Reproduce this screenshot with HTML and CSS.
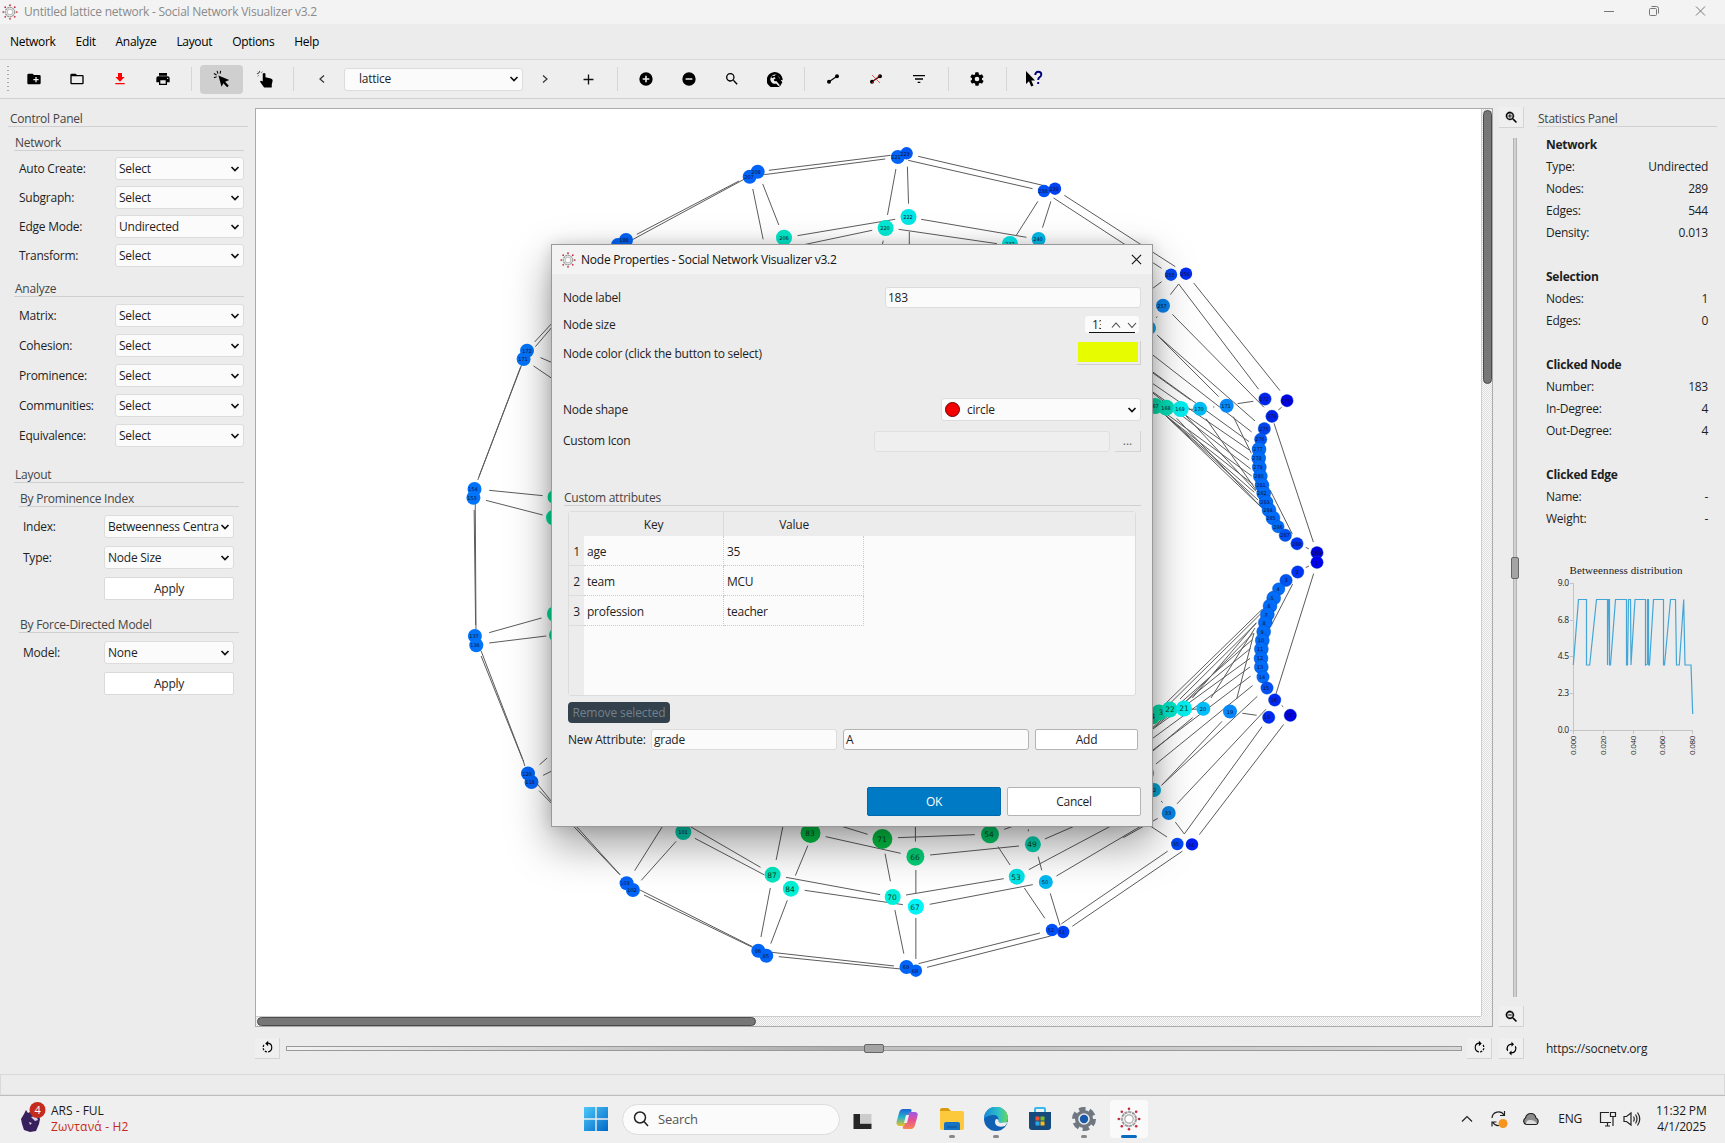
FILE: index.html
```html
<!DOCTYPE html>
<html lang="en">
<head>
<meta charset="utf-8">
<title>Social Network Visualizer</title>
<link rel="stylesheet" href="styles.css">
</head>
<body>
<svg class="defs" width="0" height="0">
  <defs>
    <symbol id="logo" viewBox="0 0 24 24">
      <circle cx="12" cy="12" r="7" fill="none" stroke="#999" stroke-width="2" stroke-dasharray="3.2 .8"/>
      <circle cx="12" cy="12" r="4.2" fill="#fff" stroke="#aaa" stroke-width="1.2"/>
      <path d="M12 2.500v4M12 17.500v4M2.500 12h4M17.500 12h4M5.300 5.300l3 3M15.700 15.700l3 3M5.300 18.700l3-3M15.700 8.300l3-3" stroke="#bbb"/>
      <g fill="#c4283c"><circle cx="12" cy="1.800" r="1.300"/><circle cx="12" cy="22.200" r="1.300"/><circle cx="1.800" cy="12" r="1.300"/><circle cx="22.200" cy="12" r="1.300"/><circle cx="4.800" cy="4.800" r="1.300"/><circle cx="19.200" cy="4.800" r="1.300"/><circle cx="4.800" cy="19.200" r="1.300"/><circle cx="19.200" cy="19.200" r="1.300"/></g>
    </symbol>
    <symbol id="chev" viewBox="0 0 10 10"><path d="M1.500 3l3.500 3.500L8.500 3" fill="none" stroke="#111" stroke-width="1.700"/></symbol>
    <symbol id="rotate" viewBox="0 0 24 24"><path d="M13 4.100V1l-4.600 4.500L13 10V6.100a6 6 0 0 1 0 11.800v2a8 8 0 0 0 0-15.800z"/><path d="M7.100 8.500L5.700 7.100A8 8 0 0 0 4.100 11h2a6 6 0 0 1 1-2.500zM6.100 13h-2c.2 1.400.7 2.700 1.600 3.900l1.400-1.400a6 6 0 0 1-1-2.500zm1 5.300c1.200.9 2.500 1.400 3.900 1.600v-2a6 6 0 0 1-2.500-1z"/></symbol>
  </defs>
</svg>

<header class="titlebar">
  <svg class="logo"><use href="#logo"/></svg>
  <span>Untitled lattice network - Social Network Visualizer v3.2</span>
  <svg class="winbtns" viewBox="0 0 112 20" fill="none" stroke="#777"><path d="M5 10.500h10M97 5.500l9 9M106 5.500l-9 9"/><rect x="50.500" y="7.500" width="7" height="7" rx="1"/><path d="M52.500 5.500h5q2 0 2 2v5"/></svg>
</header>

<nav class="menubar"><span>Network</span><span>Edit</span><span>Analyze</span><span>Layout</span><span>Options</span><span>Help</span></nav>

<div class="toolbar">
  <i class="grip"></i>
  <svg class="tb" viewBox="0 0 24 24"><path d="M20 6h-8l-2-2H4a2 2 0 0 0-2 2v12c0 1.100.9 2 2 2h16a2 2 0 0 0 2-2V8a2 2 0 0 0-2-2zm-1 8h-3v3h-2v-3h-3v-2h3V9h2v3h3z"/></svg>
  <svg class="tb" viewBox="0 0 24 24"><path d="M20 6h-8l-2-2H4a2 2 0 0 0-2 2v12c0 1.100.9 2 2 2h16a2 2 0 0 0 2-2V8a2 2 0 0 0-2-2zm0 12H4V8h16z"/></svg>
  <svg class="tb red" viewBox="0 0 24 24"><path d="M19 9h-4V3H9v6H5l7 7zM5 18v2h14v-2z"/></svg>
  <svg class="tb" viewBox="0 0 24 24"><path d="M19 8H5a3 3 0 0 0-3 3v6h4v4h12v-4h4v-6a3 3 0 0 0-3-3zm-3 11H8v-5h8zm3-7a1 1 0 1 1 0-2 1 1 0 0 1 0 2zM18 3H6v4h12z"/></svg>
  <i class="sep"></i>
  <div class="tool on"><svg viewBox="0 0 20 20"><path d="M6 6l12 5-4.500 2 4 4.500-1.800 1.700-4.200-4.500-2 4z"/><path d="M4.500 1l1 3M8.500 1l-.6 3M1 4l3 1.500M1 8.500L4 7.500" stroke="#000" stroke-width="1.200"/></svg></div>
  <div class="tool"><svg viewBox="0 0 20 20"><path d="M7.500 4q1.500-1.500 3 0v4l6 1.500q2 .5 2 2.500l-1 4v3.500H9L4.500 13q.5-1.800 3-.3z"/><path d="M4 1v2M1 4h2M6 3l1-1M2 2l1 1M3 6L2 7" stroke="#333"/></svg></div>
  <i class="sep s2"></i>
  <svg class="arrow a1" viewBox="0 0 10 10"><path d="M7 1.500L3 5l4 3.500"/></svg>
  <div class="combo netbox"><span>lattice</span><svg><use href="#chev"/></svg></div>
  <svg class="arrow a2" viewBox="0 0 10 10"><path d="M3 1.500L7 5 3 8.500"/></svg>
  <svg class="arrow a3" viewBox="0 0 10 10"><path d="M5 .5v9M.5 5h9"/></svg>
  <i class="sep s3"></i>
  <svg class="tb" viewBox="0 0 24 24"><path d="M12 2a10 10 0 1 0 0 20 10 10 0 0 0 0-20zm5 11.200h-3.800V17h-2.400v-3.800H7v-2.400h3.800V7h2.400v3.800H17z"/></svg>
  <svg class="tb" viewBox="0 0 24 24"><path d="M12 2a10 10 0 1 0 0 20 10 10 0 0 0 0-20zm5 11.200H7v-2.400h10z"/></svg>
  <svg class="tb" viewBox="0 0 24 24"><path d="M15.500 14h-.8l-.3-.3a6.500 6.500 0 1 0-.7.7l.3.3v.8l5 5 1.500-1.500zm-6 0a4.500 4.500 0 1 1 0-9 4.500 4.500 0 0 1 0 9z"/></svg>
  <svg class="tb" viewBox="0 0 24 24"><path d="M21 21A12 12 0 1 1 23.500 14L19 13a7 7 0 1 0-5 6l3 3.500-4 1.500" /><path d="M6 9q2-3 5-1.500L14 5q4 1 4 5l5 7-3 5-6-7q-3 1-4-2l3-2-2-2-3 2z"/></svg>
  <i class="sep s4"></i>
  <svg class="tb" viewBox="0 0 24 24"><path d="M6 16L18 8" stroke="#000" stroke-width="1.800"/><circle cx="6" cy="16" r="3"/><circle cx="18" cy="8" r="3"/></svg>
  <svg class="tb" viewBox="0 0 24 24"><path d="M6 16L18 8" stroke="#000" stroke-width="1.800"/><circle cx="6" cy="16" r="3"/><circle cx="18" cy="8" r="3"/><path d="M6 6l12 12M18 5L6 18" stroke="#e22" stroke-width="1.100"/></svg>
  <svg class="tb" viewBox="0 0 24 24"><path d="M3 6h18v2H3zM6 11h12v2H6zM10 16h4v2h-4z"/></svg>
  <i class="sep s4"></i>
  <svg class="tb" viewBox="0 0 24 24"><path d="M19.400 13a7 7 0 0 0 0-2l2.100-1.600c.2-.2.300-.4.100-.6l-2-3.500c-.1-.2-.4-.3-.6-.2l-2.500 1a7 7 0 0 0-1.700-1l-.4-2.600a.5.500 0 0 0-.5-.5h-4a.5.500 0 0 0-.5.500L9 5.100a7 7 0 0 0-1.700 1l-2.500-1c-.2-.1-.5 0-.6.200l-2 3.500c-.1.200-.1.500.1.600L4.500 11a7 7 0 0 0 0 2l-2.100 1.600c-.2.200-.3.400-.1.600l2 3.500c.1.200.4.300.6.200l2.500-1a7 7 0 0 0 1.700 1l.4 2.600c0 .3.200.5.500.5h4c.3 0 .5-.2.500-.5l.4-2.600a7 7 0 0 0 1.700-1l2.500 1c.2.100.5 0 .6-.2l2-3.500c.1-.2.100-.5-.1-.6zM12 15.500a3.500 3.500 0 1 1 0-7 3.500 3.500 0 0 1 0 7z"/></svg>
  <i class="sep s6"></i>
  <svg class="help" viewBox="0 0 18 18"><path d="M1 1v13l3-2.800 2.200 5.300 2.300-1-2.200-5H10z"/><path d="M10.300 5q0-3.300 3-3.300t3 2.800q0 1.700-1.600 2.600T13.200 10M13.200 12v2" fill="none" stroke="#00007c" stroke-width="1.900"/></svg>
</div>

<main class="main">
  <aside class="control">
    <h2 class="grp">Control Panel</h2>
    <section class="in1">
      <h3 class="grp">Network</h3>
      <div class="rows g6">
        <label>Auto Create:</label><div class="combo"><span>Select</span><svg><use href="#chev"/></svg></div>
        <label>Subgraph:</label><div class="combo"><span>Select</span><svg><use href="#chev"/></svg></div>
        <label>Edge Mode:</label><div class="combo"><span>Undirected</span><svg><use href="#chev"/></svg></div>
        <label>Transform:</label><div class="combo"><span>Select</span><svg><use href="#chev"/></svg></div>
      </div>
      <h3 class="grp m14">Analyze</h3>
      <div class="rows g7">
        <label>Matrix:</label><div class="combo"><span>Select</span><svg><use href="#chev"/></svg></div>
        <label>Cohesion:</label><div class="combo"><span>Select</span><svg><use href="#chev"/></svg></div>
        <label>Prominence:</label><div class="combo"><span>Select</span><svg><use href="#chev"/></svg></div>
        <label>Communities:</label><div class="combo"><span>Select</span><svg><use href="#chev"/></svg></div>
        <label>Equivalence:</label><div class="combo"><span>Select</span><svg><use href="#chev"/></svg></div>
      </div>
      <h3 class="grp m20">Layout</h3>
      <div class="in2">
        <h4 class="grp">By Prominence Index</h4>
        <div class="rows g8">
          <label>Index:</label><div class="combo"><span>Betweenness Centra</span><svg><use href="#chev"/></svg></div>
          <label>Type:</label><div class="combo"><span>Node Size</span><svg><use href="#chev"/></svg></div>
          <button class="btn">Apply</button>
        </div>
        <h4 class="grp m17">By Force-Directed Model</h4>
        <div class="rows g8">
          <label>Model:</label><div class="combo"><span>None</span><svg><use href="#chev"/></svg></div>
          <button class="btn">Apply</button>
        </div>
      </div>
    </section>
  </aside>

  <section class="center">
    <div class="view">
      <svg class="graph" viewBox="256 109 1225 907">
        <g class="edges">
          <path transform="translate(540 0) scale(.3827 .3333)" d="M253 703L520 543M240 720L533 538M598 511L916 466M586 524L902 477M988 469L1325 559M962 481L1287 566M930 507L908 645M960 500L963 611M556 567L583 718M582 552L624 675M673 707L928 658M690 734L868 691M996 658L1271 712M937 688L1194 731M897 722L894 736M965 695V740M1301 604L1244 707M1335 604L1313 683M1342 594L1624 805M1370 586L1660 800"/>
          <path transform="translate(0 0) scale(.3667 .3333)" d="M1458 1026L1505 970M1460 1040L1505 982M1474 1073L1510 1090M1455 1098L1510 1139M1422 1097L1306 1430M1420 1100L1303 1440"/>
          <path transform="translate(0 380) scale(.3667 .3333)" d="M1293 390L1297 735M1296 370L1298 748M1334 331L1480 347M1325 361L1480 405M1334 758L1477 714M1334 789L1490 768M1312 813L1428 1145M1312 828L1425 1138"/>
          <path transform="translate(1130 90) scale(.3333)" d="M67 596L95 575M191 579L450 902M146 582L386 898M146 582L121 614M127 673L402 952M82 736L375 993M82 736L266 920M67 794L365 1026M67 845L357 1055M67 848L182 930M67 880L358 1080M67 905L357 1110M67 908L362 1137M100 965L365 1158M105 975L370 1184M105 975L373 1207M105 975L384 1230M110 980L392 1250M140 985L392 1250M168 978L378 1204M228 986L378 1200M310 980L364 1090M323 941L370 934M455 952L445 960M249 951h4M420 1200L487 1332M432 1000L550 1356M527 1372L537 1377M527 1433L537 1428M78 683L82 680M176 958h14"/>
          <path transform="translate(1130 530) scale(.3333 .3381)" d="M551 129L437 488M488 160L425 280M396 235L110 510M390 250L118 515M380 275L150 500M370 305L165 510M366 325L67 585M362 350L67 588M360 380L67 590M360 405L67 617M362 432L67 652M368 460L78 692M382 492L95 755M276 566L95 755M408 530L141 810M396 582L163 899L136 864M461 575L208 901M372 305L320 500M375 290L243 497M378 275L187 497M337 542L380 548M455 519L460 523M188 555L67 655M186 530h14M93 802L98 806M83 853L-20 910M60 875L111 908M113 950L-206 1165M157 950L-173 1172"/>
          <path transform="translate(440 760) scale(.4464 .3333)" d="M300 200L402 343M306 200L404 345M498 200L436 332M529 244L451 361M561 200L718 322M571 235L727 345M768 200L753 300M740 384L719 531M778 421L741 551M824 257L796 347M864 230L1032 280M895 197L958 223M1026 233L1198 224M997 281L1009 364M1065 197V245M1066 330V400M1066 474V597M775 352L986 404M817 391L1037 434M1019 450L1039 581M1044 405L1263 356M1097 433L1328 374M1250 260L1277 315M1340 290L1348 331M1309 384L1355 475M1367 400L1389 497M1098 285L1297 258M1264 208L1285 198M1355 237L1422 198M1319 329L1503 198M1381 348L1568 200M1072 611L1344 519M1091 622L1368 528M743 577L1017 618M759 590L1032 627M448 390L700 560M457 405L700 562M222 92L252 133M218 72L252 128M186 0L190 18M223 14L240 -6M231 46L252 32M1318 208V214"/>
        </g>
        <g fill="#0064f8">
          <circle cx="749.700" cy="176.700" r="7"/><circle cx="757.700" cy="171.700" r="7"/><circle cx="897.800" cy="157" r="7"/><circle cx="906.600" cy="153.300" r="6.200" fill="#0058f4"/><circle cx="618" cy="245" r="7"/><circle cx="626" cy="240" r="7"/>
          <circle cx="1044" cy="191" r="6.200" fill="#0050fa"/><circle cx="1055" cy="188.700" r="6.200" fill="#0040f0"/><circle cx="1171" cy="274.700" r="6.200" fill="#0048f4"/><circle cx="1186" cy="273.700" r="6.200" fill="#002cf0"/>
          <circle cx="1052" cy="930" r="6.200" fill="#0050fa"/><circle cx="1063.200" cy="932" r="6.200" fill="#0040f0"/><circle cx="1177.300" cy="844" r="6.200" fill="#0048f4"/><circle cx="1192" cy="844.400" r="6.200" fill="#0020f4"/>
          <circle cx="527" cy="350.700" r="7" fill="#0074fa"/><circle cx="523.600" cy="359" r="7" fill="#0074fa"/><circle cx="474.500" cy="489" r="7" fill="#0074fa"/><circle cx="473.400" cy="497.700" r="7" fill="#0074fa"/><circle cx="474.900" cy="636" r="7" fill="#0074fa"/><circle cx="476.300" cy="645.300" r="7" fill="#0074fa"/><circle cx="528" cy="773.500" r="7"/><circle cx="531.500" cy="782" r="7"/><circle cx="626.600" cy="883.300" r="7"/><circle cx="632.900" cy="890" r="7"/><circle cx="758.300" cy="950.700" r="7"/><circle cx="766.300" cy="955.700" r="7"/><circle cx="906.500" cy="967" r="7"/><circle cx="915.900" cy="970.700" r="6.200"/>
        </g>
        <g fill="#00e6e6">
          <circle cx="908.500" cy="217" r="8"/><circle cx="885.600" cy="228" r="8" fill="#00e8d2"/><circle cx="784" cy="237.700" r="8" fill="#00e6c8"/><circle cx="1010" cy="244" r="8"/><circle cx="1038.600" cy="239" r="7" fill="#00b8e8"/><circle cx="766" cy="252" r="8"/>
          <circle cx="554.500" cy="497" r="7" fill="#00dc96"/><circle cx="554" cy="517.700" r="8" fill="#00dc96"/><circle cx="555" cy="614" r="8" fill="#00dc96"/><circle cx="556" cy="635" r="7" fill="#00dc96"/>
          <circle cx="683.300" cy="832" r="8" fill="#06ccac"/><circle cx="772.600" cy="874.700" r="8" fill="#00e6c0"/><circle cx="790.900" cy="888.700" r="8" fill="#00f0d8"/><circle cx="892.700" cy="897" r="8" fill="#00f0dc"/><circle cx="915.900" cy="906.700" r="8" fill="#00f4f8"/><circle cx="1016.800" cy="876.700" r="8" fill="#00e4e8"/><circle cx="1045.800" cy="882" r="7" fill="#00b8f0"/><circle cx="1032.900" cy="844.300" r="8" fill="#06d2b0"/>
          <circle cx="810.500" cy="833" r="10" fill="#04c044"/><circle cx="882.400" cy="839" r="10" fill="#04c044"/><circle cx="915.400" cy="856.700" r="9" fill="#06d278"/><circle cx="990" cy="834.300" r="9" fill="#06c868"/>
          <circle cx="1163" cy="305.700" r="7" fill="#0a84f0"/><circle cx="1149" cy="328" r="7" fill="#0aa8e4"/><circle cx="1154" cy="790" r="7" fill="#06a8d8"/><circle cx="1147" cy="773" r="7" fill="#06c0b0"/><circle cx="1168.700" cy="813" r="7" fill="#0a84e8"/>
          <circle cx="1155.300" cy="406" r="8" fill="#06d8a8"/><circle cx="1166.300" cy="407.700" r="8" fill="#00e0b8"/><circle cx="1180.700" cy="409" r="8" fill="#00f0f0"/><circle cx="1200" cy="408.700" r="7" fill="#00bcf4"/><circle cx="1226.700" cy="405.700" r="7" fill="#0488fa"/>
          <circle cx="1152" cy="716.600" r="8" fill="#06cc90"/><circle cx="1159" cy="712.600" r="8" fill="#00dca8"/><circle cx="1169.700" cy="709.500" r="8" fill="#00e8cc"/><circle cx="1184" cy="708.500" r="8" fill="#00f0f0"/><circle cx="1203.300" cy="708.800" r="7" fill="#00bcf8"/><circle cx="1230" cy="711.500" r="7" fill="#0488fa"/>
        </g>
        <g fill="#006cfa" class="arc">
          <circle cx="1265" cy="399" r="6.200" fill="#0024f0"/><circle cx="1287" cy="400.700" r="6.200" fill="#0000e6"/><circle cx="1272" cy="416.300" r="6.200" fill="#0020ec"/><circle cx="1264.300" cy="428.700" r="6.200" fill="#0044f0"/><circle cx="1260.700" cy="439.300" r="6.200" fill="#0058f4"/><circle cx="1259" cy="449.300" r="7"/><circle cx="1258.700" cy="458.300" r="7"/><circle cx="1259.300" cy="467.300" r="7"/><circle cx="1260.300" cy="476.300" r="7"/><circle cx="1262" cy="485.300" r="7"/><circle cx="1263.700" cy="493.300" r="7"/><circle cx="1266" cy="502.300" r="7"/><circle cx="1269" cy="510" r="7"/><circle cx="1273" cy="518" r="7"/><circle cx="1278" cy="526.700" r="6.200"/><circle cx="1285.300" cy="535.300" r="6.200" fill="#0054f4"/><circle cx="1297" cy="543.700" r="6.200" fill="#0034f4"/><circle cx="1317" cy="552.700" r="6.200" fill="#0000dc"/><circle cx="1317" cy="562.300" r="6.200" fill="#0000f0"/>
          <circle cx="1297.700" cy="572" r="6.200" fill="#0034f4"/><circle cx="1286" cy="580.400" r="6.200" fill="#0054f4"/><circle cx="1278.700" cy="589" r="6.200"/><circle cx="1273.700" cy="598" r="7"/><circle cx="1270" cy="606" r="7"/><circle cx="1267.300" cy="614.500" r="7"/><circle cx="1265.300" cy="622.600" r="7"/><circle cx="1263.700" cy="631.800" r="7"/><circle cx="1262.300" cy="640.500" r="7"/><circle cx="1261.300" cy="649" r="7"/><circle cx="1261" cy="658.500" r="7"/><circle cx="1261.300" cy="667" r="7"/><circle cx="1263" cy="677" r="6.200"/><circle cx="1267" cy="688" r="6.200" fill="#0050f4"/><circle cx="1274.700" cy="700" r="6.200" fill="#0028f0"/><circle cx="1268.700" cy="717.300" r="6.200" fill="#0028f4"/><circle cx="1290.300" cy="715.300" r="6.200" fill="#0000e0"/>
        </g>
        <g class="lab">
          <text x="908" y="219">222</text><text x="885" y="230">220</text><text x="784" y="240">206</text><text x="1038" y="241">240</text><text x="683" y="834">101</text><text x="1010" y="246">237</text><text x="1154" y="408">167</text><text x="1166" y="410">168</text><text x="1180" y="411">169</text><text x="1199" y="411">170</text><text x="1226" y="408">171</text><text x="1162" y="308">257</text>
          <text x="1230" y="714">19</text><text x="1203" y="711">20</text><text x="1168" y="815">33</text><text x="1153" y="792">32</text><text x="1045" y="884">50</text><text x="749" y="179">207</text><text x="756" y="174">208</text><text x="896" y="159">221</text><text x="905" y="156">223</text><text x="1043" y="193">238</text><text x="1054" y="191">239</text><text x="624" y="242">188</text><text x="1170" y="277">255</text><text x="1185" y="276">256</text><text x="527" y="353">172</text><text x="523" y="361">171</text><text x="473" y="491">154</text><text x="472" y="500">153</text><text x="474" y="638">137</text><text x="475" y="647">136</text><text x="527" y="776">120</text><text x="530" y="784">118</text><text x="625" y="885">103</text><text x="632" y="892">102</text><text x="758" y="953">86</text><text x="766" y="958">85</text><text x="906" y="969">69</text><text x="915" y="973">68</text><text x="1051" y="932">52</text><text x="1062" y="934">51</text><text x="1176" y="846">35</text><text x="1191" y="847">34</text>
          <text x="1264" y="401">272</text><text x="1286" y="403">273</text><text x="1272" y="418">274</text><text x="1264" y="431">275</text><text x="1260" y="441">276</text><text x="1258" y="451">277</text><text x="1257" y="460">278</text><text x="1258" y="469">279</text><text x="1259" y="478">280</text><text x="1261" y="487">281</text><text x="1262" y="495">282</text><text x="1265" y="504">283</text><text x="1268" y="512">284</text><text x="1271" y="520">285</text><text x="1278" y="529">286</text><text x="1285" y="537">287</text><text x="1297" y="546">288</text><text x="1317" y="555">289</text><text x="1317" y="565">1</text><text x="1297" y="574">2</text><text x="1286" y="582">3</text><text x="1278" y="591">4</text><text x="1272" y="600">5</text><text x="1269" y="608">6</text><text x="1266" y="617">7</text><text x="1264" y="625">8</text><text x="1262" y="634">9</text><text x="1261" y="642">10</text><text x="1260" y="651">11</text><text x="1260" y="660">12</text><text x="1260" y="669">13</text><text x="1262" y="679">14</text><text x="1266" y="690">15</text><text x="1274" y="702">16</text><text x="1267" y="719">18</text><text x="1290" y="717">17</text>
        </g>
        <g class="lab big"><text x="810" y="836">83</text><text x="882" y="842">71</text><text x="915" y="860">66</text><text x="989" y="837">54</text><text x="1032" y="847">49</text><text x="1016" y="880">53</text><text x="772" y="878">87</text><text x="790" y="892">84</text><text x="892" y="900">70</text><text x="915" y="910">67</text><text x="1184" y="711">21</text><text x="1170" y="712">22</text><text x="1161" y="715">3</text><text x="1153" y="719">4</text></g>
      </svg>
      <div class="vtrack"><i></i></div>
      <div class="htrack"><i></i></div>
      <i class="corner"></i>
    </div>
    <div class="rot">
      <span class="flat"><svg viewBox="0 0 24 24"><use href="#rotate"/></svg></span>
      <div class="hslider"><i></i></div>
      <span class="flat"><svg class="flip" viewBox="0 0 24 24"><use href="#rotate"/></svg></span>
    </div>
  </section>

  <section class="zoom">
    <span class="flat"><svg viewBox="0 0 24 24"><path d="M15.500 14h-.8l-.3-.3a6.500 6.500 0 1 0-.7.7l.3.3v.8l5 5 1.500-1.500zm-6 0a4.500 4.500 0 1 1 0-9 4.500 4.500 0 0 1 0 9zM12 10h-2v2H9v-2H7V9h2V7h1v2h2z" stroke="#000" stroke-width=".6"/></svg></span>
    <div class="vslider"><i></i></div>
    <span class="flat"><svg viewBox="0 0 24 24"><path d="M15.500 14h-.8l-.3-.3a6.500 6.500 0 1 0-.7.7l.3.3v.8l5 5 1.500-1.500zm-6 0a4.500 4.500 0 1 1 0-9 4.500 4.500 0 0 1 0 9zM7 9h5v1H7z" stroke="#000" stroke-width=".6"/></svg></span>
    <span class="flat last"><svg viewBox="0 0 24 24"><path d="M12 6v3l4-4-4-4v3a8 8 0 0 0-6.800 12.300l1.500-1.500A6 6 0 0 1 12 6zm6.800 1.700l-1.500 1.500A6 6 0 0 1 12 18v-3l-4 4 4 4v-3a8 8 0 0 0 6.800-12.300z"/></svg></span>
  </section>

  <aside class="stats">
    <h2 class="grp">Statistics Panel</h2>
    <dl>
      <div><b>Network</b></div><div><dt>Type:</dt><dd>Undirected</dd></div><div><dt>Nodes:</dt><dd>289</dd></div><div><dt>Edges:</dt><dd>544</dd></div><div><dt>Density:</dt><dd>0.013</dd></div>
      <div class="gap"><b>Selection</b></div><div><dt>Nodes:</dt><dd>1</dd></div><div><dt>Edges:</dt><dd>0</dd></div>
      <div class="gap"><b>Clicked Node</b></div><div><dt>Number:</dt><dd>183</dd></div><div><dt>In-Degree:</dt><dd>4</dd></div><div><dt>Out-Degree:</dt><dd>4</dd></div>
      <div class="gap"><b>Clicked Edge</b></div><div><dt>Name:</dt><dd>-</dd></div><div><dt>Weight:</dt><dd>-</dd></div>
    </dl>
    <svg class="chart" viewBox="1537 559 180 200">
      <text class="ct" x="1626" y="574" text-anchor="middle" textLength="113">Betweenness distribution</text>
      <path d="M1573.500 583V730.500H1692.500M1570 583.500h4M1570 620.500h4M1570 656.500h4M1570 693.500h4M1570 730.500h4M1573.500 730v4M1603.500 730v4M1633.500 730v4M1662.500 730v4M1692.500 730v4" stroke="#c4c4c4" fill="none"/>
      <g text-anchor="end"><text x="1569" y="586">9.0</text><text x="1569" y="623">6.8</text><text x="1569" y="659">4.5</text><text x="1569" y="696">2.3</text><text x="1569" y="733">0.0</text></g>
      <g text-anchor="end" class="xt"><text transform="translate(1576 736) rotate(-90)">0.000</text><text transform="translate(1606 736) rotate(-90)">0.020</text><text transform="translate(1636 736) rotate(-90)">0.040</text><text transform="translate(1665 736) rotate(-90)">0.060</text><text transform="translate(1695 736) rotate(-90)">0.080</text></g>
      <path d="M1573.300 665L1578.500 599.500H1586.500V665H1589.700L1596.500 599.500H1607.500V665L1608.500 599.500H1609.500V665H1610.500L1615.500 599.500H1626.500V665H1627.500L1628.500 599.500H1630.500L1631 665L1635 599.500H1645.500V665L1647.500 664V599.500H1648.500V665H1649.500L1653.500 599.500H1663.500V665H1664.500L1670.500 599.500H1675.500L1676.500 665H1679.300L1683.700 599.500L1685 665H1691L1692.700 714" fill="none" stroke="#43a6d6" stroke-width="1.200"/>
    </svg>
    <p class="url">https://socnetv.org</p>
  </aside>
</main>

<div class="status"></div>

<footer class="taskbar">
  <div class="widget">
    <svg viewBox="0 0 26 32"><path d="M6 8l2 3 4-2 6 2 2 6-1 5-3 7-6 1-6-2-2-6-1-5 3-5z" fill="#38205c"/><path d="M11 15l5-1 2 4-3 1zM9 20l3 1-2 2z" fill="#d8cfe6"/><circle cx="17.500" cy="8" r="8" fill="#c42b1c"/><text x="17.500" y="12" text-anchor="middle">4</text></svg>
    <div><p>ARS - FUL</p><p class="live">Ζωντανά - H2</p></div>
  </div>
  <svg class="start" viewBox="0 0 24 24"><defs><linearGradient id="w" x2="1" y2="1"><stop stop-color="#4cc8f8"/><stop offset="1" stop-color="#0068c8"/></linearGradient></defs><path fill="url(#w)" d="M0 0h11.300v11.300H0zM12.700 0H24v11.300H12.700zM0 12.700h11.300V24H0zM12.700 12.700H24V24H12.700z"/></svg>
  <div class="search"><svg viewBox="0 0 16 16"><circle cx="7" cy="6.500" r="5.500"/><path d="M11 10.500L15 15"/></svg><span>Search</span></div>
  <div class="apps">
    <span><svg viewBox="0 0 24 24"><path d="M2.500 7h18v15h-18z" fill="#262626"/><path d="M9 2.500h15v14H9z" fill="#efefef"/><path d="M9 7h11.500v9.500H9z" fill="#ccc"/></svg></span>
    <span><svg viewBox="0 0 24 24"><defs><linearGradient id="c1" y2="1" x2="0"><stop stop-color="#1c62d8"/><stop offset=".5" stop-color="#28b4c8"/><stop offset="1" stop-color="#f0c020"/></linearGradient><linearGradient id="c2" y2="1" x2="0"><stop stop-color="#9858e8"/><stop offset=".5" stop-color="#e85090"/><stop offset="1" stop-color="#f88850"/></linearGradient></defs><path d="M8 2h7q2 0 1.500 2L13 16q-1 3-4 3H4q-3-1-2.500-4L4 6q1-4 4-4z" fill="url(#c1)"/><path d="M15 5h5q3.500.5 2.500 4L20 18q-1 4-4 4H9q-2-.5-1-2.500 2-.5 3-4L13 8q.5-3 2-3z" fill="url(#c2)"/><path d="M11 8h3l-2 8H9z" fill="#eee"/></svg></span>
    <span class="dot"><svg viewBox="0 0 24 24"><path d="M0 3q0-2 2-2h6l3 3H0z" fill="#d89a10"/><path d="M0 4h22q2 0 2 2v15q0 2-2 2H2q-2 0-2-2z" fill="#fcc93c"/><path d="M4 23v-6q0-2 2-2h12q2 0 2 2v6z" fill="#1572c4"/><path d="M7 20h10" stroke="#0d4f90"/></svg></span>
    <span class="dot"><svg viewBox="0 0 24 24"><defs><linearGradient id="e1"><stop stop-color="#1888d8"/><stop offset=".6" stop-color="#2cc0c8"/><stop offset="1" stop-color="#68d858"/></linearGradient></defs><circle cx="12" cy="12" r="12" fill="#1060b4"/><path d="M0 12A12 12 0 0 1 24 11q0 5-5 5-5 0-4.500-2Q15 7 8 8q-6 1-8 4z" fill="url(#e1)"/><path d="M14.500 14Q14 17 24 15l-3 4q-6 2-9-1-2-3 0-6 3 0 2.500 2z" fill="#eee"/></svg></span>
    <span><svg viewBox="0 0 24 24"><path d="M7 6V2q0-1 1-1h8q1 0 1 1v4" fill="none" stroke="#38b8ec" stroke-width="2"/><path d="M1 5h22v15q0 3-3 3H4q-3 0-3-3z" fill="#174a7c"/><path d="M7.500 9.500h4v4h-4z" fill="#f05030"/><path d="M12.500 9.500h4v4h-4z" fill="#7cba20"/><path d="M7.500 14.500h4v4h-4z" fill="#28a8e8"/><path d="M12.500 14.500h4v4h-4z" fill="#fcb818"/></svg></span>
    <span class="dot"><svg viewBox="0 0 24 24"><circle cx="12" cy="12" r="9" fill="#6f7780"/><circle cx="12" cy="12" r="10" fill="none" stroke="#6f7780" stroke-width="4" stroke-dasharray="6.500 3.970"/><circle cx="12" cy="12" r="5" fill="#1858a8" stroke="#e8e8e8" stroke-width="1.600"/></svg></span>
    <span class="active"><svg><use href="#logo"/></svg></span>
  </div>
  <div class="tray">
    <svg class="t-chev" viewBox="0 0 12 12"><path d="M1 8.500L6 3.500l5 5"/></svg>
    <svg class="t-sync" viewBox="0 0 18 18"><path d="M2 8a6.500 6.500 0 0 1 12-3M14.500 1v4.500H10M9 15.500a6 6 0 0 1-6-3M2 16.500V12h4.500"/><circle cx="13" cy="13.500" r="4.500" fill="#f7941d" stroke="none"/></svg>
    <svg class="t-cloud" viewBox="0 0 18 14"><path d="M4.500 12.500a3.500 3.500 0 0 1-1-6.500q1-4.500 5.500-4.500 4 0 5 4.500a3.500 3.500 0 0 1 0 6.500z" fill="#8c8c8c"/><path d="M4 12q0-4 4-4 5 0 7 4z" fill="#ddd" stroke="none"/></svg>
    <span>ENG</span>
    <svg class="t-mon" viewBox="0 0 18 18"><path d="M10 2.500H1.500v10H12M6 16h5M8.500 12.500V16M11.500 2.500h5v4h-5zM14 6.500V16"/></svg>
    <svg class="t-vol" viewBox="0 0 18 18"><path d="M1 6.500h2.500L8 3v12l-4.500-3.500H1zM10.500 6.500q1.500 2.500 0 5M12.500 4.500q3 4.500 0 9M14.500 2.500q4.500 6.500 0 13"/></svg>
    <div class="clock"><p>11:32 PM</p><p>4/1/2025</p></div>
  </div>
</footer>

<div class="dialog">
  <div class="dtitle"><svg class="logo"><use href="#logo"/></svg><span>Node Properties - Social Network Visualizer v3.2</span><svg class="x" viewBox="0 0 12 12"><path d="M1 1l10 10M11 1L1 11"/></svg></div>
  <div class="form">
    <div class="fr r1"><label>Node label</label><div class="input w256">183</div></div>
    <div class="fr r2"><label>Node size</label><div class="spin"><span>13</span><svg viewBox="0 0 26 10"><path d="M1 7.500L5 3l4 4.500M17 3l4 4.500L25 3"/></svg></div></div>
    <div class="fr r3"><label>Node color (click the button to select)</label><div class="color"><i></i></div></div>
    <div class="fr r4"><label>Node shape</label><div class="combo shape"><i class="red-dot"></i><span>circle</span><svg><use href="#chev"/></svg></div></div>
    <div class="fr r5"><label>Custom Icon</label><div class="input off"></div><div class="more">...</div></div>
    <h3 class="grp">Custom attributes</h3>
    <div class="table">
      <div class="th"></div><div class="th c">Key</div><div class="th">Value</div><div class="th e"></div>
      <div class="rh">1</div><div class="td">age</div><div class="td">35</div><div class="e"></div>
      <div class="rh">2</div><div class="td">team</div><div class="td">MCU</div><div class="e"></div>
      <div class="rh">3</div><div class="td">profession</div><div class="td">teacher</div><div class="e"></div>
      <div class="rh z"></div>
    </div>
    <button class="remove">Remove selected</button>
    <div class="newattr"><label>New Attribute:</label><div class="input">grade</div><div class="input focus">A</div><button class="btn dk">Add</button></div>
    <div class="actions"><button class="btn ok">OK</button><button class="btn dk">Cancel</button></div>
  </div>
</div>
</body>
</html>
```
FILE: styles.css
```css
* { box-sizing: border-box; margin: 0; padding: 0; }
body { width: 1725px; height: 1143px; overflow: hidden; position: relative; background: #ececec; color: #1e1e1e; font: 12px/16px "Open Sans", "Noto Sans", sans-serif; letter-spacing: -.24px; display: flex; flex-direction: column; }
.defs { position: absolute; }
i { display: block; font-style: normal; }
svg { display: block; flex: none; }
button { font: inherit; letter-spacing: inherit; color: inherit; }

.titlebar { height: 24px; flex: none; background: #f3f3f3; display: flex; align-items: center; padding: 0 14px 0 2px; color: #8a8a8a; }
.titlebar span { margin-left: 6px; flex: 1; }
.titlebar .winbtns { margin-top: -2px; }
.logo { width: 16px; height: 16px; }
.winbtns { width: 112px; height: 20px; }
.menubar { height: 36px; flex: none; border-bottom: 1px solid #d9d9d9; display: flex; gap: 20px; padding: 10px 0 0 10px; color: #000; letter-spacing: -.32px; }
.toolbar { height: 39px; flex: none; border-bottom: 1px solid #d0d0d0; background: #eee; display: flex; align-items: center; padding-left: 7px; }
.grip { width: 2px; height: 26px; background: repeating-linear-gradient(#aaa 0 1px, transparent 1px 4px); margin-right: 17px; }
.tb { width: 16px; height: 16px; margin-right: 27px; }
.red { fill: #f00; }
.sep { width: 1px; height: 24px; background: #d6d6d6; margin: 0 8px 0 -7px; }
.tool { width: 43px; height: 29px; border-radius: 4px; display: grid; place-items: center; }
.tool svg { width: 18px; height: 18px; }
.tool.on { background: #cfcfcf; }
.s2 { margin: 0 23px 0 7px; }
.arrow { width: 10px; height: 10px; fill: none; stroke: #333; stroke-width: 1.2; }
.a1 { margin-right: 17px; }
.combo { height: 23px; background: #fbfbfb; border: 1px solid #dcdcdc; border-radius: 3px; display: flex; align-items: center; padding: 0 3px 0 3px; white-space: nowrap; overflow: hidden; }
.combo span { flex: 1; }
.combo svg { width: 10px; height: 10px; }
.netbox { width: 179px; padding-left: 14px; }
.a2 { margin: 0 33px 0 17px; }
.a3 { width: 11px; height: 11px; stroke: #111; }
.s3 { margin: 0 20px 0 23px; }
.s4 { margin: 0 20px 0 -6px; }
.s6 { margin: 0 18px 0 -6px; }
.help { width: 18px; height: 18px; }

.main { height: 975px; flex: none; display: grid; grid-template-columns: 255px 1238px 44px 1fr; }
.grp { font: inherit; height: 16px; border-bottom: 1px solid #d0d0d0; color: #444; padding-left: 2px; line-height: 16px; }
.control { padding: 12px 0 0 8px; }
.control > .grp { width: 240px; }
.in1 { padding: 8px 11px 0 6px; }
.in1 > .grp { padding-left: 1px; }
.rows { display: grid; grid-template-columns: 96px 129px; padding: 6px 0 0 5px; align-items: center; }
.rows .combo, .rows .btn { grid-column: 2; }
.g6 { row-gap: 6px; }
.g7 { row-gap: 7px; padding-top: 7px; }
.g8 { row-gap: 8px; padding-top: 8px; grid-template-columns: 81px 130px; padding-left: 4px; }
.m14 { margin-top: 14px; } .m17 { margin-top: 17px; } .m20 { margin-top: 20px; }
.in2 { padding: 8px 5px 0 5px; }
.in2 .grp { padding-left: 1px; }
.btn { height: 24px; background: #fff; border: 1px solid #dadada; border-radius: 2px; }
.rows .btn { height: 23px; }

.center { padding-top: 9px; }
.view { width: 1238px; height: 919px; border: 1px solid #aaa; background: #fff; display: grid; grid-template: 907px 10px / 1225px 11px; }
.graph { width: 1225px; height: 907px; }
.edges path { fill: none; stroke: #5c5c5c; stroke-width: 1; vector-effect: non-scaling-stroke; }
.arc circle { stroke: #0048b8; stroke-width: .4; }
.lab { font: 5px "DejaVu Sans", sans-serif; text-anchor: middle; letter-spacing: 0; fill: #113; }
.lab.big { font-size: 7.500px; fill: #042; }
.vtrack, .htrack { background: repeating-conic-gradient(#dcdcdc 0 25%, #fafafa 0 50%) 0 0 / 2px 2px; }
.vtrack { border-left: 1px solid #ccc; padding: 1px; }
.htrack { border-top: 1px solid #ccc; padding-left: 1px; }
.vtrack i { width: 9px; height: 274px; background: #777; border: 1px solid #4c4c4c; border-radius: 5px; }
.htrack i { width: 499px; height: 9px; background: #777; border: 1px solid #4c4c4c; border-radius: 5px; }
.corner { background: #ececec; }
.rot { display: flex; align-items: center; height: 22px; margin-top: 10px; }
.flat { width: 25px; height: 21px; display: grid; place-items: center; border: solid #d4d4d4; border-width: 0 1px 1px 0; background: #efefef; }
.flat svg { width: 15px; height: 15px; }
.flip { transform: scaleX(-1); }
.hslider { width: 1176px; height: 5px; margin: 0 5px 0 6px; border: 1px solid #999; background: linear-gradient(90deg, #f2f2f2, #a8a8a8 50%, #c0c0c0 50%, #d8d8d8); position: relative; }
.hslider i { position: absolute; left: 577px; top: -3px; width: 20px; height: 9px; background: #a4a4a4; border: 1px solid #666; border-radius: 2px; }
.zoom { padding: 8px 0 0 6px; display: flex; flex-direction: column; }
.vslider { width: 4px; height: 859px; margin: 10px 0 9px 14px; background: #d0d0d0; border: solid #b4b4b4; border-width: 0 1px; position: relative; }
.vslider i { position: absolute; left: -3px; top: 419px; width: 8px; height: 22px; background: #a4a4a4; border: 1px solid #666; border-radius: 2px; }
.last { margin-top: 11px; }
.stats { padding: 12px 9px 0 0; }
.stats .grp { padding-left: 1px; }
.stats dl { padding: 7px 9px 0 9px; }
.stats dl div { height: 22px; line-height: 22px; display: flex; justify-content: space-between; }
.stats dl .gap { margin-top: 22px; }
.chart { width: 180px; height: 200px; margin-top: 29px; font-size: 8.500px; letter-spacing: -.2px; fill: #222; }
.chart .ct { font: 11px "Liberation Serif", serif; letter-spacing: 0; }
.chart .xt { font-size: 8px; letter-spacing: -.3px; }
.url { padding: 282px 0 0 9px; }
.status { height: 21px; flex: none; border: 1px solid #d9d9d9; border-bottom-color: #e2e2e2; }

.taskbar { height: 48px; flex: none; border-top: 1px solid #bdbdbd; background: #efefef; display: flex; align-items: center; position: relative; color: #1a1a1a; padding-bottom: 1px; }
.widget { display: flex; align-items: center; gap: 5px; padding-left: 20px; width: 584px; }
.widget svg { width: 26px; height: 32px; margin-top: -3px; }
.widget svg text { font-size: 11px; fill: #fff; }
.widget p { letter-spacing: 0; }
.widget .live { color: #c42b1c; letter-spacing: .2px; }
.start { width: 24px; height: 24px; }
.search { width: 218px; height: 31px; border: 1px solid #dcdcdc; border-radius: 16px; background: #fbfbfb; margin-left: 14px; display: flex; align-items: center; padding-left: 10px; gap: 9px; font-size: 13px; color: #555; }
.search svg { width: 16px; height: 16px; fill: none; stroke: #222; stroke-width: 1.5; }
.apps { display: flex; margin-left: 4px; gap: 6.300px; }
.apps span { width: 38px; height: 38px; display: grid; place-items: center; position: relative; border-radius: 4px; }
.apps svg { width: 24px; height: 24px; }
.apps .active { background: #fafafa; }
.dot::after, .active::after { content: ""; position: absolute; left: 16px; bottom: 0; width: 6px; height: 3px; border-radius: 2px; background: #888; }
.active::after { left: 11px; width: 16px; background: #0a6cbf; }
.tray { margin-left: auto; display: flex; align-items: center; padding-right: 19px; }
.tray svg { fill: none; stroke: #222; stroke-width: 1.2; }
.tray svg.t-chev { width: 12px; height: 12px; margin-right: 17px; }
.t-sync { width: 18px; height: 18px; margin-right: 14px; }
.t-cloud { width: 18px; height: 14px; margin-right: 18px; }
.t-mon { width: 18px; height: 18px; margin-left: 17px; }
.t-vol { width: 18px; height: 18px; margin: 0 15px 0 6px; }
.clock { text-align: right; width: 50px; white-space: nowrap; letter-spacing: -.15px; }

.dialog { position: absolute; left: 551px; top: 244px; width: 602px; height: 583px; background: #ececec; border: 1px solid #999; box-shadow: 0 18px 40px rgba(0,0,0,.38), 0 0 14px rgba(0,0,0,.14); }
.dtitle { height: 29px; background: #f3f3f3; display: flex; align-items: center; padding: 0 10px 0 8px; color: #111; }
.dtitle span { flex: 1; margin-left: 5px; }
.x { width: 11px; height: 11px; stroke: #111; stroke-width: 1.2; }
.form { padding: 0 11px; display: flex; flex-direction: column; }
.fr { display: flex; align-items: center; height: 22px; flex: none; }
.fr label { flex: 1; }
.input { height: 21px; background: #fbfbfb; border: 1px solid #dcdcdc; border-radius: 3px; padding: 2px 2px; line-height: 16px; }
.w256 { width: 256px; }
.r1 { margin-top: 12px; }
.r2 { margin-top: 5px; }
.r3 { margin-top: 7px; }
.r1 label, .r2 label, .r3 label { padding-top: 2px; }
.r2 .spin { margin-top: 1px; }
.r4 { margin-top: 34px; height: 23px; }
.r5 { margin-top: 9px; }
.spin { width: 54px; height: 17px; margin-right: 2px; border-radius: 3px; display: flex; align-items: center; justify-content: space-between; padding: 0 2px 0 7px; background: linear-gradient(#111, #111) 4px 100% / 46px 1px no-repeat #fbfbfb; }
.spin span { width: 9px; overflow: hidden; }
.spin svg { width: 26px; height: 10px; fill: none; stroke: #444; stroke-width: 1.1; }
.color { width: 64px; height: 24px; border: 1px solid #d0d0d0; border-width: 0 1px 1px 0; padding: 1px 2px 2px 1px; }
.color i { height: 20px; background: #e8fc00; }
.shape { width: 200px; }
.red-dot { width: 15px; height: 15px; border-radius: 50%; background: #f40000; border: 1px solid #600; margin-right: 7px; }
.off { width: 236px; background: #efefef; border-color: #e0e0e0; }
.more { width: 26px; height: 21px; margin-left: 5px; border: solid #d4d4d4; border-width: 0 1px 1px 0; text-align: center; color: #666; line-height: 20px; letter-spacing: 0; }
.form .grp { margin: 38px 0 0 1px; padding-left: 0; }
.table { margin: 5px 5px 0; height: 185px; border: 1px solid #dcdcdc; border-radius: 3px; background: #fbfbfb; display: grid; grid-template: 24px 30px 30px 30px 1fr / 15px 140px 140px 1fr; }
.th { background: #ececec; text-align: center; line-height: 26px; }
.th.c { border-right: 1px solid #dadada; }
.rh { background: #ececec; border-bottom: 1px solid #dcdcdc; text-align: center; line-height: 31px; }
.rh.z { border: 0; }
.td { border: dotted #ccc; border-width: 0 1px 1px 0; padding-left: 3px; line-height: 31px; }
.remove { margin: 6px 0 0 5px; width: 102px; height: 21px; line-height: 21px; background: #32414b; color: #75808a; border: 0; border-radius: 4px; text-align: center; flex: none; letter-spacing: -.1px; }
.newattr { display: grid; grid-template-columns: 77px 186px 186px 103px; column-gap: 6px; margin: 6px 4px 0 5px; align-items: center; white-space: nowrap; }
.newattr .btn { height: 21px; }
.focus, .dk { border-color: #b4b4b4; }
.actions { display: flex; justify-content: flex-end; gap: 6px; margin-top: 37px; }
.actions .btn { width: 134px; height: 29px; }
.actions .ok { background: #007ac4; color: #fff; border-color: #0069ad; }
```
